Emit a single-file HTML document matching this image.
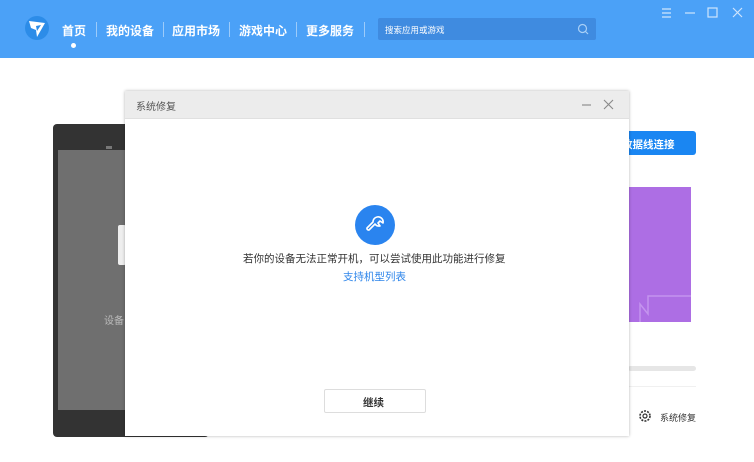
<!DOCTYPE html>
<html><head><meta charset="utf-8"><style>
*{margin:0;padding:0;box-sizing:border-box}
body{width:754px;height:462px;overflow:hidden;background:#fff;font-family:"Liberation Sans","Noto Sans CJK SC",sans-serif;position:relative}
.a{position:absolute}
.hdr{left:0;top:0;width:754px;height:58px;background:#4ba1f7}
.nav{top:22px;color:#fff;font-size:12px;font-weight:bold;white-space:nowrap}
.sep{top:22px;width:1px;height:15px;background:#9ccbfa}
</style></head><body>
<div class="a hdr"></div>
<svg class="a" style="left:24px;top:15px" width="26" height="26" viewBox="0 0 26 26"><circle cx="13" cy="13" r="12" fill="#2c8ce8"/><path d="M5 6 L21 8 L13 22 L12 15 L7 13 Z" fill="#fff"/><path d="M12 11 L17 10 L13 16Z" fill="#2c8ce8"/></svg>
<div class="a nav" style="left:62px">首页</div>
<div class="a" style="left:71px;top:43px;width:5px;height:5px;border-radius:50%;background:#fff"></div>
<div class="a sep" style="left:96px"></div>
<div class="a nav" style="left:106px">我的设备</div>
<div class="a sep" style="left:163px"></div>
<div class="a nav" style="left:172px">应用市场</div>
<div class="a sep" style="left:229px"></div>
<div class="a nav" style="left:239px">游戏中心</div>
<div class="a sep" style="left:296px"></div>
<div class="a nav" style="left:306px">更多服务</div>
<div class="a sep" style="left:364px"></div>
<div class="a" style="left:378px;top:18px;width:218px;height:22px;background:#3f8be0;border-radius:2px"></div>
<div class="a" style="left:385px;top:24px;color:#fff;font-size:8.5px">搜索应用或游戏</div>
<svg class="a" style="left:577px;top:23px" width="12" height="12"><circle cx="5.5" cy="5.5" r="4" fill="none" stroke="#a9d0f7" stroke-width="1.2"/><path d="M8.5 8.5L11 11" stroke="#a9d0f7" stroke-width="1.2"/></svg>
<svg class="a" style="left:660px;top:6px" width="90" height="14" stroke="#cfe5fc" stroke-width="1.2" fill="none"><path d="M2 3h9M2 7h9M2 11h9"/><path d="M25 7h10"/><rect x="48" y="2" width="9" height="9"/><path d="M73 2l9 9M82 2l-9 9"/></svg>
<div class="a" style="left:53px;top:124px;width:156px;height:313px;background:#333;border-radius:4px"></div>
<div class="a" style="left:58px;top:150px;width:150px;height:260px;background:#6f6f6f"></div>
<div class="a" style="left:106px;top:146px;width:6px;height:3px;background:#777"></div>
<div class="a" style="left:118px;top:225px;width:8px;height:40px;background:#eee;border-radius:2px"></div>
<div class="a" style="left:104px;top:312px;color:#bbb;font-size:10px">设备</div>
<div class="a" style="left:605px;top:131px;width:91px;height:24px;background:#1a86f2;border-radius:3px"></div>
<div class="a" style="left:615px;top:137px;color:#fff;font-size:10.5px;font-weight:bold">S数据线连接</div>
<div class="a" style="left:628px;top:187px;width:63px;height:135px;background:#ad6ee4"></div>
<svg class="a" style="left:628px;top:280px" width="63" height="42" fill="none" stroke="#c494ee" stroke-width="1.5"><path d="M12 42V24l8 10V16h43"/></svg>
<div class="a" style="left:628px;top:366px;width:68px;height:5px;background:#e6e6e6;border-radius:3px"></div>
<div class="a" style="left:628px;top:386px;width:68px;height:1px;background:#f0f0f0"></div>
<svg class="a" style="left:638px;top:409px" width="14" height="14"><circle cx="7" cy="7" r="5" fill="none" stroke="#333" stroke-width="1.6" stroke-dasharray="2 1.2"/><circle cx="7" cy="7" r="2" fill="none" stroke="#333" stroke-width="1.2"/></svg>
<div class="a" style="left:660px;top:411px;color:#333;font-size:9px">系统修复</div>
<div class="a" style="left:125px;top:91px;width:504px;height:345px;background:#fff;box-shadow:0 0 3px rgba(0,0,0,.3)"></div>
<div class="a" style="left:125px;top:91px;width:504px;height:28px;background:#ececec;border-bottom:1px solid #e0e0e0"></div>
<div class="a" style="left:136px;top:98px;color:#555;font-size:10px">系统修复</div>
<svg class="a" style="left:580px;top:98px" width="40" height="14" stroke="#888" stroke-width="1.1" fill="none"><path d="M2 7h9"/><path d="M24 2l9 9M33 2l-9 9"/></svg>
<div class="a" style="left:355px;top:205px;width:40px;height:40px;border-radius:50%;background:#2a84ef"></div>
<svg class="a" style="left:363px;top:213px" width="24" height="24" fill="none" stroke="#fff" stroke-width="1.6" stroke-linejoin="round"><path d="M14 4a5 5 0 0 1 6 6l-3-2-2 2 2 3a5 5 0 0 1-5-2l-6 6a1.6 1.6 0 0 1-2-2l6-6a5 5 0 0 1 4-5z"/></svg>
<div class="a" style="left:243px;top:251px;color:#333;font-size:10.5px;white-space:nowrap">若你的设备无法正常开机，可以尝试使用此功能进行修复</div>
<div class="a" style="left:343px;top:269px;color:#2f86ea;font-size:10.5px">支持机型列表</div>
<div class="a" style="left:324px;top:389px;width:102px;height:24px;border:1px solid #ddd;border-radius:2px;background:#fff"></div>
<div class="a" style="left:363px;top:395px;color:#333;font-size:10.5px;font-weight:bold">继续</div>
</body></html>
